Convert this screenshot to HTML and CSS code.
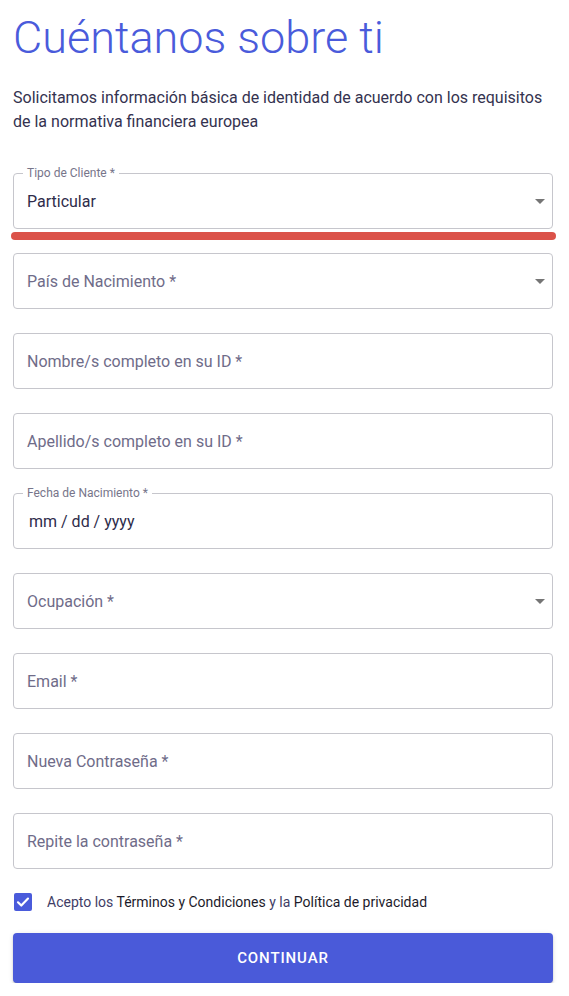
FILE: index.html
```html
<!DOCTYPE html>
<html lang="es">
<head>
<meta charset="utf-8">
<title>Cuéntanos sobre ti</title>
<link rel="stylesheet" href="styles.css">
</head>
<body>
<main class="page">
  <h1 class="title">Cuéntanos sobre ti</h1>
  <p class="intro">Solicitamos información básica de identidad de acuerdo con los requisitos de la normativa financiera europea</p>

  <form class="form">
    <div class="field-wrap">
      <div class="field filled select">
        <span class="label">Tipo de Cliente *</span>
        <span class="value">Particular</span>
        <span class="arrow"></span>
      </div>
      <div class="highlight"></div>
    </div>

    <div class="field select">
      <span class="placeholder">País de Nacimiento *</span>
      <span class="arrow"></span>
    </div>

    <div class="field">
      <span class="placeholder">Nombre/s completo en su ID *</span>
    </div>

    <div class="field">
      <span class="placeholder">Apellido/s completo en su ID *</span>
    </div>

    <div class="field filled">
      <span class="label">Fecha de Nacimiento *</span>
      <span class="value date">mm / dd / yyyy</span>
    </div>

    <div class="field select">
      <span class="placeholder">Ocupación *</span>
      <span class="arrow"></span>
    </div>

    <div class="field">
      <span class="placeholder">Email *</span>
    </div>

    <div class="field">
      <span class="placeholder">Nueva Contraseña *</span>
    </div>

    <div class="field">
      <span class="placeholder">Repite la contraseña *</span>
    </div>

    <label class="terms">
      <span class="checkbox">
        <svg viewBox="0 0 18 18" width="18" height="18"><path d="M4 9.3l3.3 3.2L14 5.6" fill="none" stroke="#fff" stroke-width="2.2" stroke-linecap="round" stroke-linejoin="round"/></svg>
      </span>
      <span class="terms-text">Acepto los <a class="link">Términos y Condiciones</a> y la <a class="link">Política de privacidad</a></span>
    </label>

    <button type="button" class="submit">CONTINUAR</button>
  </form>
</main>
</body>
</html>
```

FILE: styles.css
```css
* { box-sizing: border-box; }

html, body {
  margin: 0;
  padding: 0;
  background: #ffffff;
}

body {
  font-family: Roboto, "Liberation Sans", Arial, sans-serif;
  color: #2e2c4a;
}

.page {
  padding: 10px 16px 0 13px;
}

.title {
  margin: 0;
  font-size: 45px;
  font-weight: 300;
  line-height: 56px;
  color: #4a5bdb;
  letter-spacing: 0;
}

.intro {
  margin: 20px 0 0;
  font-size: 16px;
  line-height: 24px;
  color: #34324f;
}

.form {
  margin-top: 39px;
  display: flex;
  flex-direction: column;
  gap: 24px;
}

.field-wrap {
  position: relative;
  margin-bottom: -24px;
  padding-bottom: 24px;
}

.field {
  position: relative;
  height: 56px;
  border: 1px solid #c6c6cc;
  border-radius: 4px;
  display: flex;
  align-items: center;
  padding: 0 13px;
}

.label {
  position: absolute;
  top: -8px;
  left: 9px;
  padding: 0 4px;
  background: #fff;
  font-size: 12px;
  line-height: 14px;
  color: #77758a;
}

.value {
  font-size: 16px;
  color: #2e2c4a;
}

.value.date {
  padding-left: 2px;
}

.placeholder {
  font-size: 16px;
  color: #6f6c89;
}

.arrow {
  position: absolute;
  right: 7px;
  top: 25px;
  width: 0;
  height: 0;
  border-left: 5px solid transparent;
  border-right: 5px solid transparent;
  border-top: 5px solid #757575;
}

.highlight {
  position: absolute;
  left: -2px;
  right: -3px;
  top: 59px;
  height: 8px;
  border-radius: 4px;
  background: #db5249;
}

.terms {
  display: flex;
  align-items: center;
  gap: 15px;
  margin-top: -1px;
  height: 20px;
  padding-left: 1px;
  font-size: 14px;
}

.checkbox {
  width: 18px;
  height: 18px;
  border-radius: 2px;
  background: #4a5bdb;
  display: flex;
  align-items: center;
  justify-content: center;
}

.checkbox svg {
  display: block;
}

.terms-text {
  color: #3f3d66;
}

.link {
  color: #1c1b2b;
  text-decoration: none;
}

.submit {
  margin-top: -3px;
  height: 50px;
  width: 100%;
  border: none;
  border-radius: 4px;
  background: #4a5ad9;
  color: #ffffff;
  font-family: Roboto, "Liberation Sans", Arial, sans-serif;
  font-size: 15px;
  font-weight: 500;
  letter-spacing: 0.9px;
  box-shadow: 0 3px 1px -2px rgba(0,0,0,0.2), 0 2px 2px 0 rgba(0,0,0,0.14), 0 1px 5px 0 rgba(0,0,0,0.12);
}
```
